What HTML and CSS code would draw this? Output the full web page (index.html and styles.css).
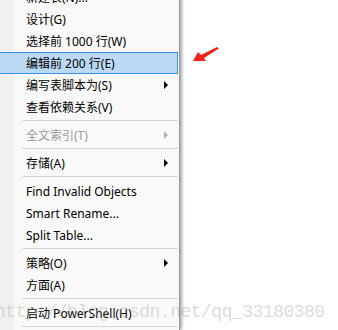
FILE: index.html
```html
<!DOCTYPE html>
<html lang="zh-CN">
<head>
  <meta charset="UTF-8" />
  <title>Context Menu</title>
  <link rel="stylesheet" href="styles.css">
</head>
<body>
  <div class="menu">
    <div class="item">新建表(N)...</div>
    <div class="item">设计(G)</div>
    <div class="item">选择前 1000 行(W)</div>
    <div class="item active">编辑前 200 行(E)</div>
    <div class="item">编写表脚本为(S)<span class="sub"></span></div>
    <div class="item">查看依赖关系(V)</div>
    <div class="sep"></div>
    <div class="item disabled">全文索引(T)<span class="sub"></span></div>
    <div class="sep"></div>
    <div class="item">存储(A)<span class="sub"></span></div>
    <div class="sep"></div>
    <div class="item">Find Invalid Objects</div>
    <div class="item">Smart Rename...</div>
    <div class="item">Split Table...</div>
    <div class="sep"></div>
    <div class="item">策略(O)<span class="sub"></span></div>
    <div class="item">方面(A)</div>
    <div class="sep"></div>
    <div class="item">启动 PowerShell(H)</div>
    <div class="sep"></div>
  </div>

  <!-- red hint arrow -->
  <svg class="pointer" width="40" height="24" viewBox="190 44 40 24">
    <polygon points="193,61 198,52 201,55 217,47 219,48.5 204,58 206,61" fill="#f2231d"/>
  </svg>

  <div class="watermark">http://blog.csdn.net/qq_33180380</div>
</body>
</html>
```

FILE: styles.css
```css
/* General */
body {
  margin: 0;
  background: #ffffff;
  overflow: hidden;
  height: 330px;
  position: relative;
  font-family: "Noto Sans", "Noto Sans CJK SC", sans-serif;
  font-size: 12px;
  color: #000;
}

/* Menu */
.menu {
  width: 182px;
  margin: -14px 0 0 -3px;
  background: linear-gradient(to right, #f0f0f0 17px, #f9f9f9 17px);
  border-right: 1px solid #979797;
  box-shadow: 2px 0 3px rgba(0, 0, 0, 0.35);
}

.item {
  height: 20px;
  margin: 0 1px;
  padding: 0 9px 0 27px;
  border: 1px solid transparent;
  display: flex;
  align-items: center;
  justify-content: space-between;
  white-space: nowrap;
}

.item.active {
  background: #bcd9f3;
  border-color: #3a8fe0;
}

.item.disabled {
  color: #9a9a9a;
}

/* Submenu arrow */
.sub {
  width: 0;
  height: 0;
  border-left: 4px solid #000;
  border-top: 4px solid transparent;
  border-bottom: 4px solid transparent;
}

.disabled .sub {
  border-left-color: #b0b0b0;
}

.sep {
  height: 6px;
  margin: 0 1px 0 25px;
  background: linear-gradient(#d3d3d3, #d3d3d3) no-repeat 0 2px / 100% 1px;
}

/* Overlays */
.pointer {
  position: absolute;
  left: 190px;
  top: 44px;
}

.watermark {
  position: absolute;
  left: -5px;
  top: 302px;
  font-family: "Liberation Mono", monospace;
  font-size: 18px;
  letter-spacing: -0.5px;
  color: rgba(150, 150, 150, 0.35);
  white-space: nowrap;
}
```
